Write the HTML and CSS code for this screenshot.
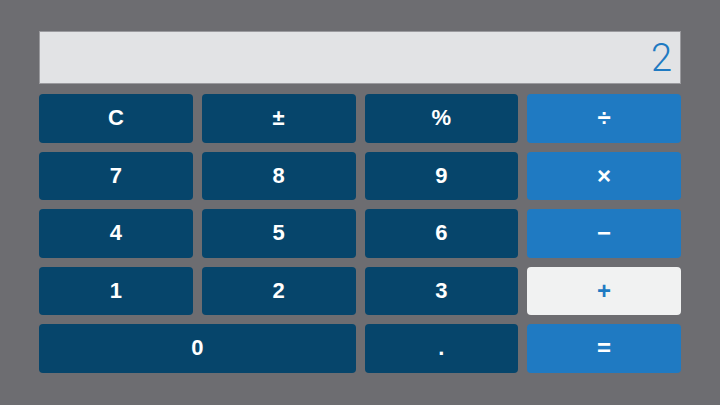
FILE: index.html
```html
<!DOCTYPE html>
<html lang="en">
<head>
    <meta charset="UTF-8">
    <meta name="viewport" content="width=device-width, initial-scale=1.0">
    <title>Calculator</title>
    <link rel="stylesheet" href="styles.css">
</head>
<body>
    <div class="calculator">
        <!-- Display -->
        <div class="display" id="display">2</div>

        <!-- Keys -->
        <div class="keys">
            <button class="key fn">C</button>
            <button class="key fn">±</button>
            <button class="key fn">%</button>
            <button class="key op">÷</button>

            <button class="key">7</button>
            <button class="key">8</button>
            <button class="key">9</button>
            <button class="key op">×</button>

            <button class="key">4</button>
            <button class="key">5</button>
            <button class="key">6</button>
            <button class="key op">−</button>

            <button class="key">1</button>
            <button class="key">2</button>
            <button class="key">3</button>
            <button class="key op active">+</button>

            <button class="key zero">0</button>
            <button class="key">.</button>
            <button class="key op">=</button>
        </div>
    </div>
</body>
</html>
```

FILE: styles.css
```css
* {
    margin: 0;
    padding: 0;
    box-sizing: border-box;
}

body {
    background-color: #6d6d71;
    font-family: "Liberation Sans", Arial, sans-serif;
    padding: 31px 39px;
}

.calculator {
    display: flex;
    flex-direction: column;
    gap: 10px;
}

.display {
    height: 53px;
    background-color: #e2e3e5;
    border: 1px solid #9a9a9e;
    color: #1f7ac2;
    font-family: Roboto, "Liberation Sans", sans-serif;
    font-weight: 300;
    font-size: 38px;
    text-align: right;
    line-height: 52px;
    padding-right: 8px;
}

.keys {
    display: grid;
    grid-template-columns: repeat(4, 1fr);
    grid-auto-rows: 48.5px;
    column-gap: 9px;
    row-gap: 9px;
}

.key {
    border: none;
    border-radius: 4px;
    background-color: #06456b;
    color: #fff;
    font-family: "Liberation Sans", Arial, sans-serif;
    font-weight: bold;
    font-size: 22px;
    cursor: pointer;
}

.key.zero {
    grid-column: span 2;
}

.key.op {
    background-color: #1f7ac2;
    font-size: 24px;
}

.key.op.active {
    background-color: #f1f2f2;
    color: #1f7ac2;
}
```
